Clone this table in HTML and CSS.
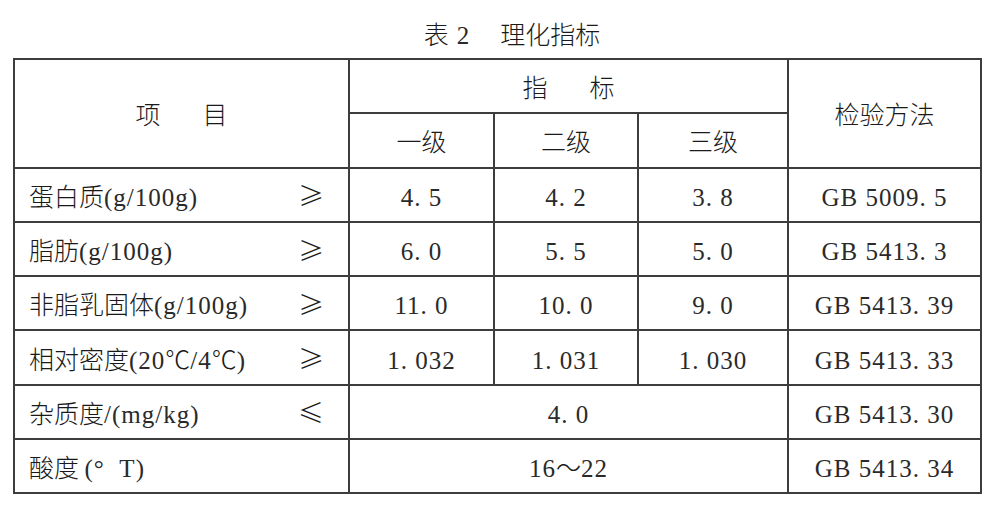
FILE: index.html
```html
<!DOCTYPE html>
<html lang="zh">
<head>
<meta charset="utf-8">
<link rel="stylesheet" href="styles.css">
</head>
<body>
<div class="title">表<span class="n">2</span><span class="gap"></span>理化指标</div>
<table class="t">
  <colgroup>
    <col class="c1"><col class="c2"><col class="c3"><col class="c4"><col class="c5">
  </colgroup>
  <tr>
    <td rowspan="2" class="head"><span class="sp">项</span>目</td>
    <td colspan="3" class="head"><span class="sp">指</span>标</td>
    <td rowspan="2" class="head">检验方法</td>
  </tr>
  <tr>
    <td class="head">一级</td>
    <td class="head">二级</td>
    <td class="head">三级</td>
  </tr>
  <tr>
    <td class="lab"><div class="row"><span>蛋白质<span class="n">(g/100g)</span></span><span class="op">≥</span></div></td>
    <td><span class="n">4. 5</span></td>
    <td><span class="n">4. 2</span></td>
    <td><span class="n">3. 8</span></td>
    <td><span class="n">GB 5009. 5</span></td>
  </tr>
  <tr>
    <td class="lab"><div class="row"><span>脂肪<span class="n">(g/100g)</span></span><span class="op">≥</span></div></td>
    <td><span class="n">6. 0</span></td>
    <td><span class="n">5. 5</span></td>
    <td><span class="n">5. 0</span></td>
    <td><span class="n">GB 5413. 3</span></td>
  </tr>
  <tr>
    <td class="lab"><div class="row"><span>非脂乳固体<span class="n">(g/100g)</span></span><span class="op">≥</span></div></td>
    <td><span class="n">11. 0</span></td>
    <td><span class="n">10. 0</span></td>
    <td><span class="n">9. 0</span></td>
    <td><span class="n">GB 5413. 39</span></td>
  </tr>
  <tr>
    <td class="lab"><div class="row"><span>相对密度<span class="n">(20</span>℃<span class="n">/4</span>℃<span class="n">)</span></span><span class="op">≥</span></div></td>
    <td><span class="n">1. 032</span></td>
    <td><span class="n">1. 031</span></td>
    <td><span class="n">1. 030</span></td>
    <td><span class="n">GB 5413. 33</span></td>
  </tr>
  <tr>
    <td class="lab"><div class="row"><span>杂质度<span class="n">/(mg/kg)</span></span><span class="op">≤</span></div></td>
    <td colspan="3"><span class="n">4. 0</span></td>
    <td><span class="n">GB 5413. 30</span></td>
  </tr>
  <tr>
    <td class="lab"><div class="row"><span>酸度 <span class="n">(°&nbsp; T)</span></span></div></td>
    <td colspan="3"><span class="n">16</span>～<span class="n">22</span></td>
    <td><span class="n">GB 5413. 34</span></td>
  </tr>
</table>
</body>
</html>
```
FILE: styles.css
```css
html, body {
  margin: 0;
  padding: 0;
  background: #fff;
}
body {
  width: 1000px;
  height: 513px;
  font-family: "Noto Sans CJK SC", sans-serif;
  font-weight: 300;
  color: #1a1a1a;
  font-size: 25px;
}
.title {
  height: 58px;
  line-height: 66px;
  box-sizing: border-box;
  text-align: center;
  padding-left: 24px;
  font-size: 25px;
}
.title .gap {
  display: inline-block;
  width: 30px;
}
.title .n {
  margin-left: 8px;
}
.n {
  font-family: "Liberation Serif", serif;
  font-weight: 400;
  font-size: 25px;
  letter-spacing: 1px;
  color: #2a2a2a;
}
.t {
  margin-left: 13px;
  border-collapse: collapse;
  table-layout: fixed;
  width: 967px;
  border: 2px solid #3d3d3d;
}
.c1 { width: 335px; }
.c2 { width: 145px; }
.c3 { width: 144px; }
.c4 { width: 150px; }
.c5 { width: 193px; }
.t td {
  border: 2px solid #3d3d3d;
  height: 52.3px;
  padding: 0;
  text-align: center;
  vertical-align: middle;
  white-space: nowrap;
}
.t td.lab {
  text-align: left;
  padding-left: 14px;
  padding-right: 24px;
}
.row {
  display: flex;
  justify-content: space-between;
  align-items: center;
}
.op {
  font-size: 26px;
}
.sp {
  margin-right: 42px;
}
```
